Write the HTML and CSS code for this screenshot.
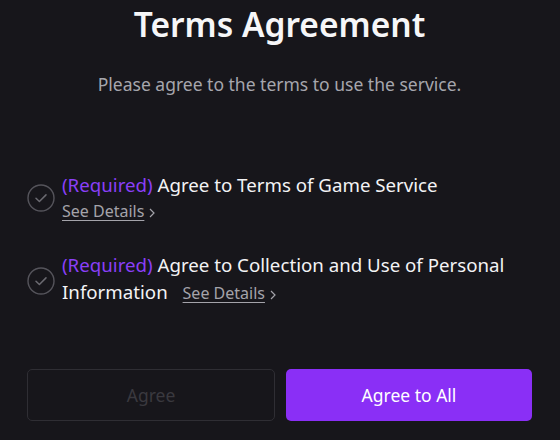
FILE: index.html
```html
<!DOCTYPE html>
<html lang="en">
<head>
<meta charset="utf-8">
<link rel="stylesheet" href="styles.css">
</head>
<body>
<main class="terms">
  <h1 class="title">Terms Agreement</h1>
  <p class="subtitle">Please agree to the terms to use the service.</p>

  <ul class="list">
    <li class="item">
      <span class="check"><svg viewBox="0 0 28 28" width="28" height="28"><circle cx="14" cy="14" r="13" fill="none" stroke="#55545b" stroke-width="1.4"/><path d="M9 14.2l3.4 3.3 6.6-6.6" fill="none" stroke="#6b6a71" stroke-width="1.5" stroke-linecap="round" stroke-linejoin="round"/></svg></span>
      <div class="body">
        <div class="label"><span class="req">(Required)</span> Agree to Terms of Game Service</div>
        <div class="details-line"><a class="details">See Details</a><svg class="chev" viewBox="0 0 6 10" width="6" height="10"><path d="M1 1l4 4-4 4" fill="none" stroke="#a4a3aa" stroke-width="1.2"/></svg></div>
      </div>
    </li>
    <li class="item item-2">
      <span class="check"><svg viewBox="0 0 28 28" width="28" height="28"><circle cx="14" cy="14" r="13" fill="none" stroke="#55545b" stroke-width="1.4"/><path d="M9 14.2l3.4 3.3 6.6-6.6" fill="none" stroke="#6b6a71" stroke-width="1.5" stroke-linecap="round" stroke-linejoin="round"/></svg></span>
      <div class="body">
        <div class="label"><span class="req">(Required)</span> Agree to Collection and Use of Personal Information <span class="inline-details"><a class="details">See Details</a><svg class="chev" viewBox="0 0 6 10" width="6" height="10"><path d="M1 1l4 4-4 4" fill="none" stroke="#a4a3aa" stroke-width="1.2"/></svg></span></div>
      </div>
    </li>
  </ul>

  <div class="actions">
    <button class="btn btn-agree" disabled>Agree</button>
    <button class="btn btn-all">Agree to All</button>
  </div>
</main>
</body>
</html>
```

FILE: styles.css
```css
* { box-sizing: border-box; }
html, body {
  margin: 0;
  background: #17161b;
}
body {
  width: 560px;
  height: 440px;
  overflow: hidden;
  font-family: "Noto Sans", "Open Sans", sans-serif;
  color: #f4f4f6;
}
.terms {
  padding: 0 28px 0 27px;
}
.title {
  margin: 0;
  font-size: 33.5px;
  font-weight: 600;
  line-height: 48px;
  text-align: center;
  color: #f6f6f8;
}
.subtitle {
  margin: 24px 0 0;
  font-size: 17.5px;
  line-height: 24px;
  text-align: center;
  color: #a6a6ad;
}
.list {
  list-style: none;
  margin: 75px 0 0;
  padding: 0;
  display: flex;
  flex-direction: column;
  gap: 27px;
}
.item {
  display: flex;
  align-items: center;
  gap: 7px;
}
.item-2 .check { margin-top: 4px; }
.check {
  flex: none;
  width: 28px;
  height: 28px;
  display: block;
}
.check svg { display: block; }
.body { flex: 1; }
.label {
  font-size: 18.7px;
  line-height: 27px;
  color: #f3f3f5;
}
.req { color: #8a3ff8; }
.details-line {
  line-height: 26px;
  font-size: 16px;
}
.details {
  color: #a4a3aa;
  text-decoration: underline;
  text-underline-offset: 3px;
  font-size: 16px;
}
.inline-details {
  margin-left: 10px;
  white-space: nowrap;
}
.chev {
  margin-left: 5px;
  vertical-align: -1px;
}
.actions {
  margin-top: 62px;
  display: flex;
  gap: 11px;
}
.btn {
  flex: 1;
  height: 52px;
  border-radius: 5px;
  font-family: inherit;
  font-size: 17.5px;
}
.btn-agree {
  background: transparent;
  border: 1px solid #2f2e34;
  color: #3a393f;
}
.btn-all {
  background: #8a2ff6;
  border: none;
  color: #ffffff;
}
```
